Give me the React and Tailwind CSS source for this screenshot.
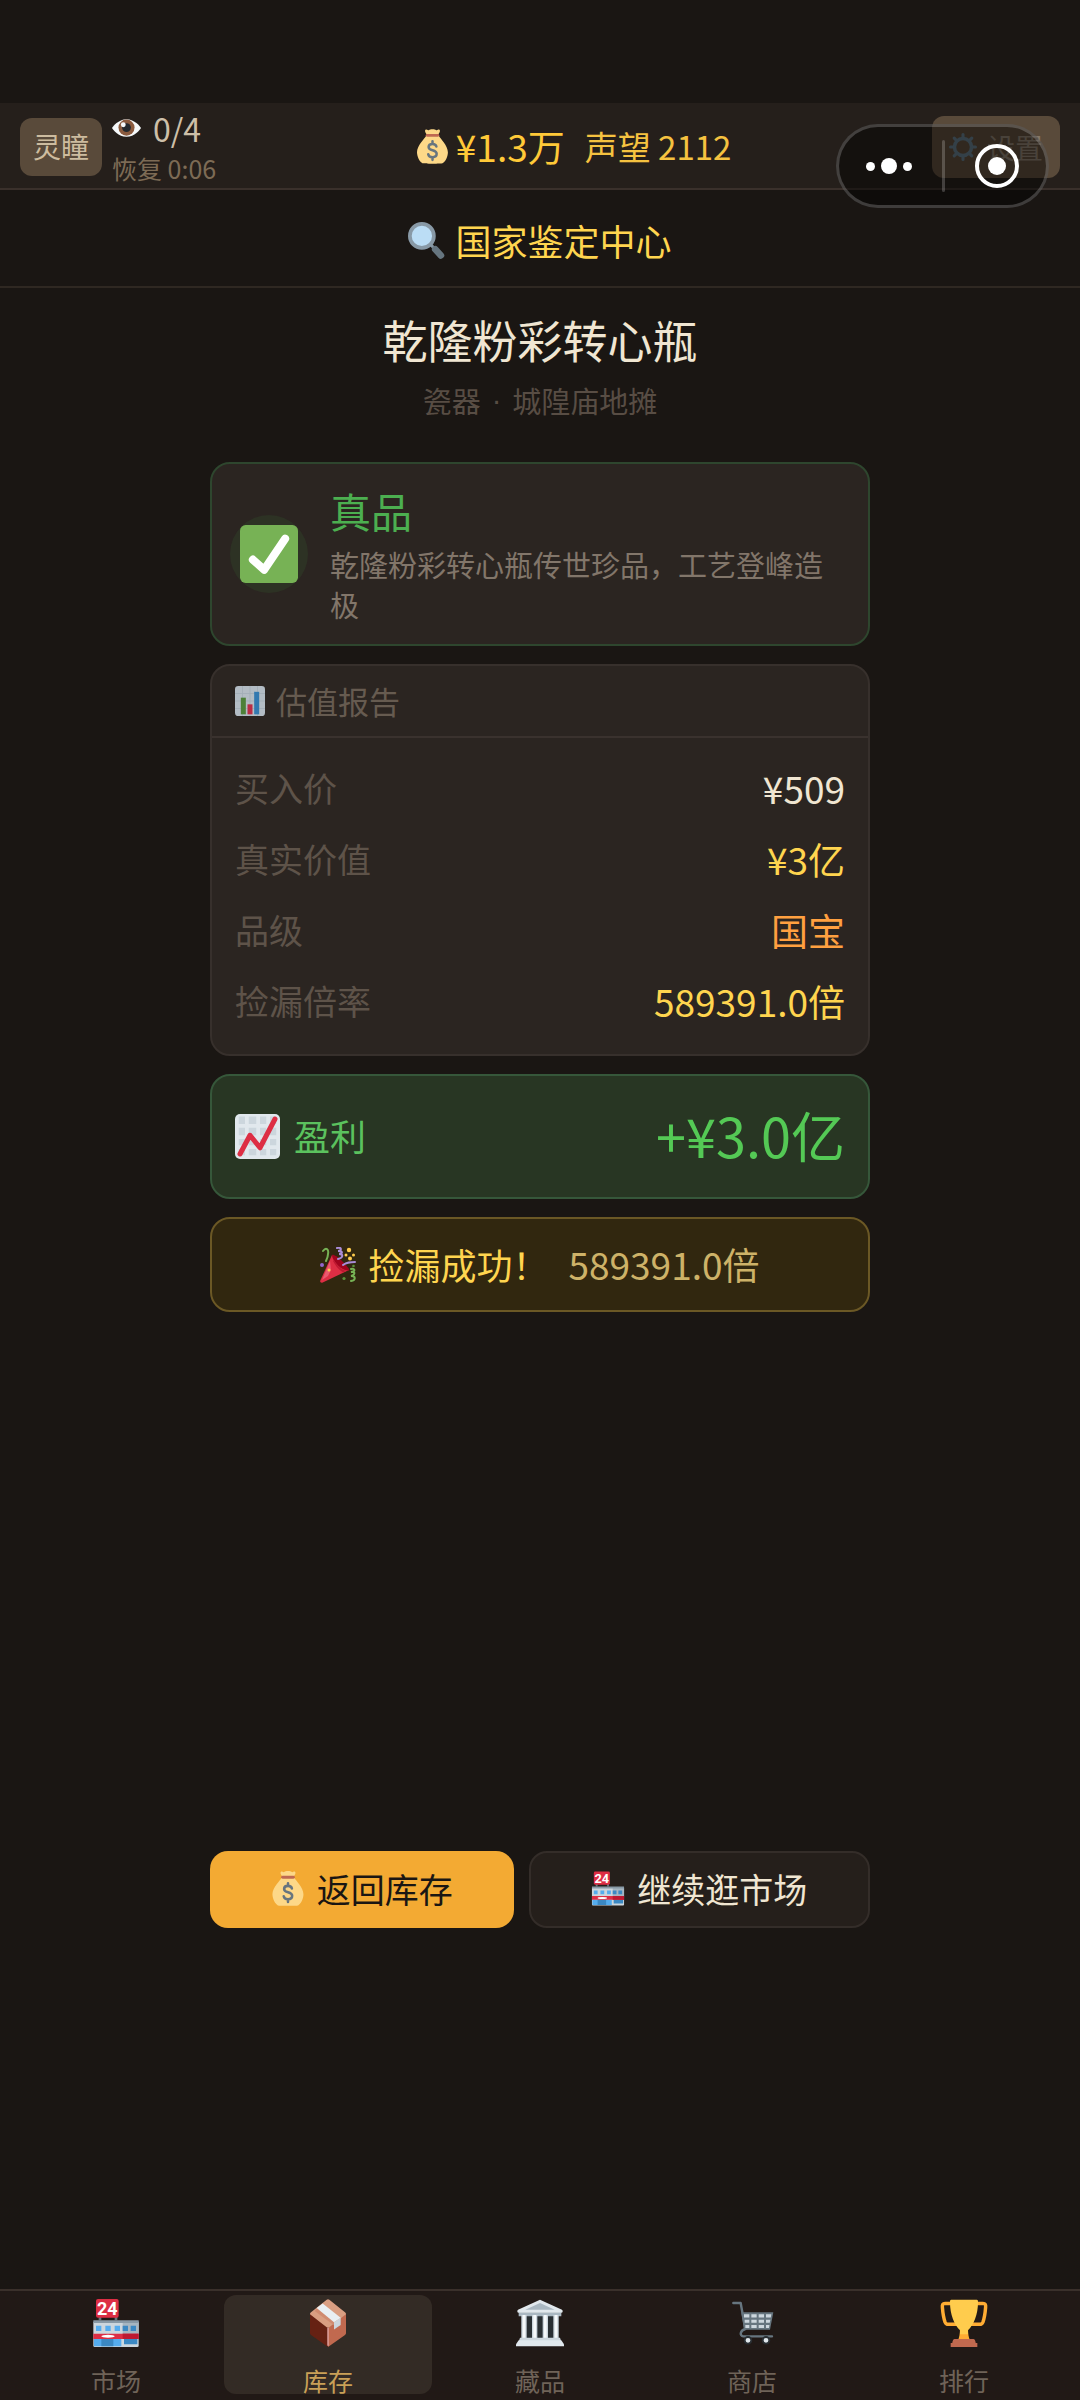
import React from 'react';

const EyeIcon = ({ className }) => (
    <svg viewBox="0 0 36 24" className={className} aria-hidden="true">
        <path fill="#f5f8fa" d="M18 1C8 1 1 10 0 12c1 2 8 11 18 11s17-9 18-11C35 10 28 1 18 1z" />
        <circle cx="18" cy="11.500" r="10" fill="#8a5a3e" />
        <circle cx="18" cy="11.500" r="5.500" fill="#24292e" />
        <circle cx="14" cy="8" r="3" fill="#f5f8fa" />
    </svg>
);

const MoneyBagIcon = ({ className }) => (
    <svg viewBox="0 0 32 36" className={className} aria-hidden="true">
        <path fill="#fdd888" d="M31.900 24c0 1-.5 8.500-5.500 11.400-1 .6-19.800.6-20.800 0C.6 32.500 0 25 0 24c0-7 8-14 9.500-17h13C24 10 31.900 17 31.900 24z" />
        <path fill="#fdd888" d="M22 5.500c1.500-2 2.300-4 1.200-4.800-1.200-.7-2 .8-3.200.4-1.400-.6-1.900-1-4-1-2 0-2.600.4-4 1C10.800 1.500 10 0 8.800.7 7.700 1.500 8.500 3.500 10 5.500z" />
        <rect x="9" y="5" width="14" height="3" rx="1.500" fill="#bf6952" />
        <path fill="none" stroke="#67757f" strokeWidth="2.600" strokeLinecap="round" d="M20 18c-.4-2-2-2.700-4-2.700-2.400 0-4 1.200-4 3.200 0 4.500 8.300 2.300 8.300 7 0 2.200-1.800 3.500-4.300 3.500-2.300 0-4-1-4.400-3M16 12.500v2.500M16 29.200v2.600" />
    </svg>
);

const MagnifierIcon = ({ className }) => (
    <svg viewBox="0 0 36 36" className={className} aria-hidden="true">
        <path stroke="#8899a6" strokeWidth="3" d="M21 21l5 5" />
        <path stroke="#66757f" strokeWidth="6.500" strokeLinecap="round" d="M26.500 26.500l5.500 6" />
        <circle cx="13.500" cy="13.500" r="11.700" fill="#bbddf5" stroke="#8899a6" strokeWidth="3.600" />
    </svg>
);

const CheckIcon = ({ className }) => (
    <svg viewBox="0 0 36 36" className={className} aria-hidden="true">
        <rect width="36" height="36" rx="3.500" fill="#77b255" />
        <path fill="none" stroke="#fff" strokeWidth="5" strokeLinecap="round" strokeLinejoin="round" d="M8 21.500l7 6.300L28 8.500" />
    </svg>
);

const BarsIcon = ({ className }) => (
    <svg viewBox="0 0 36 36" className={className} aria-hidden="true">
        <rect width="36" height="36" rx="4" fill="#b3bcc4" />
        <path stroke="#a2adb7" strokeWidth="1" d="M0 9h36M0 18h36M0 27h36M9 0v36M18 0v36M27 0v36" />
        <path fill="#4d8038" d="M7 14h6v20H7z" />
        <path fill="#bb2c45" d="M15 22h6v12h-6z" />
        <path fill="#3379b0" d="M23 7h6v27h-6z" />
    </svg>
);

const ChartUpIcon = ({ className }) => (
    <svg viewBox="0 0 36 36" className={className} aria-hidden="true">
        <rect width="36" height="36" rx="4" fill="#e1e8ed" />
        <path fill="#ccd6dd" d="M3 2h5v6H3zM11 2h6v6h-6zM20 2h5v6h-5zM28 2h5v6h-5zM3 11h5v6H3zM11 11h6v6h-6zM20 11h5v6h-5zM28 11h5v6h-5zM3 20h5v5H3zM11 20h6v5h-6zM20 20h5v5h-5zM28 20h5v5h-5zM3 28h5v5H3zM11 28h6v5h-6zM20 28h5v5h-5zM28 28h5v5h-5z" />
        <path fill="none" stroke="#dd2e44" strokeWidth="4" strokeLinecap="round" strokeLinejoin="round" d="M4 32l8-15 8 10L32 4" />
    </svg>
);

const PopperIcon = ({ className }) => (
    <svg viewBox="0 0 36 36" className={className} aria-hidden="true">
        <path fill="#dd2e44" d="M12 8L.3 33.500C-.2 35 .7 36 2.200 35.700L29 23z" />
        <path fill="#ea596e" d="M10 14L2 33l6-4 3-6z" />
        <path fill="#a0041e" d="M12 8c1-1 5 1 10 6s8 8.500 7 9.500c-3 .5-7-1-11-5s-6-8-6-10.500z" />
        <path fill="#be1931" d="M14 13c2 4 6 9 12 11l-3 1.500C18 22 15 18 13 14z" />
        <path fill="none" stroke="#77b255" strokeWidth="2" strokeLinecap="round" d="M3 4c3-4 6-2 5 3 0 3-1 5-2 7M31 22c5-1 4 3 0 3 5-1 4 3 0 4 5 0 5 4 0 5" />
        <path fill="none" stroke="#aa8dd8" strokeWidth="2" strokeLinecap="round" d="M17 1c6-1 4 3 1 3 6 0 4 3 1 3 5 0 4 4-1 5M23 18c4-3 7-3 12-3" />
        <g fill="#ffcc4d">
            <circle cx="29" cy="3" r="2.200" />
            <circle cx="26" cy="8" r="1.500" />
            <circle cx="33.500" cy="8" r="1.500" />
            <circle cx="30" cy="11.500" r="2" />
            <circle cx="9" cy="23" r="1.500" />
        </g>
        <circle cx="2" cy="18" r="2" fill="#9266cc" />
        <circle cx="24" cy="31.500" r="1.600" fill="#5c913b" />
        <circle cx="33.500" cy="19" r="1.300" fill="#5c913b" />
    </svg>
);

const StoreIcon = ({ className }) => (
    <svg viewBox="0 0 36 36" className={className} aria-hidden="true">
        <path fill="#66757f" d="M5 12h2v4H5zM17 12h2v4h-2z" />
        <rect x="3" y="0" width="17" height="14" rx="1.500" fill="#dd2e44" />
        <text x="11.500" y="12" textAnchor="middle" fontSize="13.500" fontWeight="700" fill="#fff" fontFamily="Roboto, sans-serif">24</text>
        <path fill="#ccd6dd" d="M1 17h34v18a1 1 0 0 1-1 1H2a1 1 0 0 1-1-1z" />
        <path fill="#a7b6c1" d="M23 17h12v10H23z" />
        <path fill="#8899a6" d="M1 16h34v2H1z" />
        <path fill="#55acee" d="M3 20h4v4H3zM10 20h4v4h-4zM17 20h4v4h-4zM1.500 30H22v5.500H1.500z" />
        <path fill="#3b88c3" d="M23 20h4v4h-4zM29 20h4v4h-4zM7 30h9v5.500H7zM24 30h10v4H24z" />
        <path fill="#dd2e44" d="M1 26h34v4H1z" />
        <path fill="#be1931" d="M23 26h12v4H23z" />
        <ellipse cx="12" cy="28" rx="5" ry="1.100" fill="#fff" />
    </svg>
);

const BoxIcon = ({ className }) => (
    <svg viewBox="0 0 36 36" className={className} aria-hidden="true">
        <path fill="#662113" d="M4.500 11v14.500c0 .8.4 1.300 1 1.700L18 36V21.500z" />
        <path fill="#c1694f" d="M31.500 11v14.500c0 .8-.4 1.300-1 1.700L18 36V21.500z" />
        <path fill="#d99e82" d="M4.500 11.500c0-.8.3-1.200 1-1.700L17 .6c.7-.5 1.300-.5 2 0l11.500 9.200c.7.500 1 .9 1 1.700L19 21.200c-.7.5-1.300.5-2 0z" />
        <path fill="#d08b70" d="M8 9l15 11 4-3L12 5z" />
        <path fill="#ccd6dd" d="M22.500 17.500v5.300l5-3.300v-5.400z" />
        <path fill="#e9eff3" d="M9.500 6.700L22.500 17.500l5-3.400L14 3.300z" />
        <path stroke="#e6aaaa" strokeWidth="1" d="M18 21.500V35" />
    </svg>
);

const MuseumIcon = ({ className }) => (
    <svg viewBox="0 0 36 36" className={className} aria-hidden="true">
        <path fill="#292f33" d="M4 12h28v19H4z" />
        <path fill="#aab8c2" d="M2 10h32v3H2z" />
        <path fill="#e1e8ed" d="M18 .5L34.500 8c.8.500.7 2.300-.5 2.300H2C.8 10.300.7 8.500 1.500 8z" />
        <path fill="#aab8c2" d="M18 3l11 5H7z" />
        <path fill="#ccd6dd" d="M4 12h4v19H4zM12 12h4v19h-4zM20 12h4v19h-4zM28 12h4v19h-4z" />
        <path fill="#f5f8fa" d="M5 12h2v19H5zM13 12h2v19h-2zM21 12h2v19h-2zM29 12h2v19h-2z" />
        <path fill="#ccd6dd" d="M3 29h30l1 3H2z" />
        <path fill="#e1e8ed" d="M2 31h32l2 3v1.500H0V34z" />
    </svg>
);

const CartIcon = ({ className }) => (
    <svg viewBox="0 0 36 36" className={className} aria-hidden="true">
        <path fill="#66757f" d="M10 10h24l-2.500 13H12z" />
        <path fill="none" stroke="#66757f" strokeWidth="1.800" strokeLinecap="round" strokeLinejoin="round" d="M4 3h5.500l3.500 19.500c-4 1-4.500 5-1.500 5.500H33" />
        <path fill="#ccd6dd" d="M12 11.500h4v2.300h-4zM17.500 11.500h4v2.300h-4zM23 11.500h4v2.300h-4zM28.500 11.500h4l-.4 2.300h-3.600zM12.500 15.500H16v2.300h-3.500zM17.500 15.500h4v2.300h-4zM23 15.500h4v2.300h-4zM28.500 15.500h3.300l-.5 2.300h-2.800zM13 19.500h3v2.300h-3zM17.500 19.500h4v2.300h-4zM23 19.500h4v2.300h-4zM28.500 19.500h2.600l-.4 2.300h-2.200z" />
        <circle cx="15" cy="31" r="2.500" fill="#e1e8ed" stroke="#292f33" strokeWidth="1.400" />
        <circle cx="28.500" cy="31" r="2.500" fill="#e1e8ed" stroke="#292f33" strokeWidth="1.400" />
    </svg>
);

const TrophyIcon = ({ className }) => (
    <svg viewBox="0 0 36 36" className={className} aria-hidden="true">
        <path fill="none" stroke="#ffac33" strokeWidth="2.600" d="M9 3.300H3.800c-1.800 0-2.200 1-2 3 .3 4 .9 8 2 11 .5 1.200 1.300 1.700 2.500 1.700H13M27 3.300h5.200c1.800 0 2.200 1 2 3-.3 4-.9 8-2 11-.5 1.200-1.300 1.700-2.500 1.700H23" />
        <path fill="#ffac33" d="M15 22h6c0 4 .5 7 1.500 9h-9c1-2 1.500-5 1.500-9z" />
        <path fill="#ffcc4d" d="M8.500.5h19c1 0 1 .8 1 2 0 9-3.200 17-7.500 21v3h-6v-3C10.700 19.500 7.500 11.500 7.500 2.500c0-1.200 0-2 1-2z" />
        <path fill="#c1694f" d="M11 30h14c1 0 1.500 1 1.800 3H28V36H8v-3h1.200c.3-2 .8-3 1.800-3z" />
    </svg>
);

const GearIcon = ({ className }) => (
    <svg viewBox="0 0 36 36" className={className} aria-hidden="true">
        <circle cx="18" cy="18" r="11" fill="none" stroke="#5f7683" strokeWidth="4.500" />
        <path fill="none" stroke="#5f7683" strokeWidth="4" strokeLinecap="round" d="M18 2v4M18 30v4M2 18h4M30 18h4M6.700 6.700l2.800 2.800M26.500 26.500l2.800 2.800M6.700 29.300l2.800-2.800M26.500 9.500l2.800-2.800" />
    </svg>
);

const rows = [
    { label: '买入价', value: '¥509', color: 'text-[#f0e6d2]' },
    { label: '真实价值', value: '¥3亿', color: 'text-[#ffd54f]' },
    { label: '品级', value: '国宝', color: 'text-[#ffa040]' },
    { label: '捡漏倍率', value: '589391.0倍', color: 'text-[#ffd54f]' },
];

const tabs = [
    { label: '市场', Icon: StoreIcon },
    { label: '库存', Icon: BoxIcon, active: true },
    { label: '藏品', Icon: MuseumIcon },
    { label: '商店', Icon: CartIcon },
    { label: '排行', Icon: TrophyIcon },
];

const StatusHeader = () => (
    <header className="flex h-[87px] items-center justify-between border-b-2 border-[#3a302b] bg-[#251f1b] px-5 pt-0.5">
        <div className="flex items-center gap-2.5">
            <button type="button" className="h-[58px] rounded-xl bg-[#594a3a] px-[13px] pb-0.5 text-[28px] leading-10 text-[#cdbc9f]">
                灵瞳
            </button>
            <div className="pt-0.5">
                <div className="flex items-center gap-3 text-[32px] leading-10 text-[#cdbfa8]">
                    <EyeIcon className="h-5 w-[29px]" />
                    0/4
                </div>
                <div className="text-[25px] leading-10 text-[#7d6b55]">恢复 0:06</div>
            </div>
        </div>
        <div className="flex items-center">
            <MoneyBagIcon className="mr-2 h-[35px] w-[31px]" />
            <span className="pb-0.5 text-[37px] leading-10 text-[#ffc938]">¥1.3万</span>
            <span className="ml-5 pb-0.5 text-[33px] leading-10 text-[#f5c240]">声望 2112</span>
        </div>
        <button type="button" className="flex h-[62px] items-center gap-2.5 rounded-xl bg-[#594a3a] px-[17px] text-[28px] leading-10 text-[#85786a]">
            <GearIcon className="h-7 w-7" />
            设置
        </button>
    </header>
);

// Host mini-program controls, floating over the page header
const Capsule = () => (
    <div className="absolute top-[124px] right-[31px] flex h-[84px] w-[213px] items-center rounded-full border-3 border-white/20 bg-black/45">
        <button type="button" aria-label="更多" className="flex h-full flex-1 items-center justify-center gap-1.5 pr-1">
            <span className="h-[9px] w-[9px] rounded-full bg-white" />
            <span className="h-4 w-4 rounded-full bg-white" />
            <span className="h-[9px] w-[9px] rounded-full bg-white" />
        </button>
        <span className="h-[52px] w-[3px] rounded-full bg-white/20" />
        <button type="button" aria-label="关闭" className="flex h-full flex-1 items-center justify-center pl-0.5">
            <span className="flex h-11 w-11 items-center justify-center rounded-full border-4 border-white">
                <span className="h-[18px] w-[18px] rounded-full bg-white" />
            </span>
        </button>
    </div>
);

const ResultCard = () => (
    <section className="flex items-center gap-[22px] rounded-[20px] border-2 border-[#2e462e] bg-[#2b2521] px-[18px] py-5">
        <div className="flex h-[78px] w-[78px] shrink-0 items-center justify-center rounded-full bg-[#2d3224]">
            <CheckIcon className="h-[58px] w-[58px]" />
        </div>
        <div>
            <h2 className="mb-2 text-[41px] leading-[52px] text-[#4caf50]">真品</h2>
            <p className="text-[29px] leading-10 text-[#82766a]">乾隆粉彩转心瓶传世珍品，工艺登峰造极</p>
        </div>
    </section>
);

const ReportCard = () => (
    <section className="rounded-[20px] border-2 border-[#37302c] bg-[#2b2521]">
        <h2 className="flex items-center gap-[11px] border-b-2 border-[#3a322e] px-[23px] py-[15px] text-[31px] leading-10 text-[#665b50]">
            <BarsIcon className="h-[30px] w-[30px]" />
            估值报告
        </h2>
        <dl className="px-[23px] pt-3.5 pb-[18px]">
            {rows.map((row) => (
                <div key={row.label} className="flex h-[71px] items-center justify-between">
                    <dt className="text-[34px] leading-10 text-[#5e5349]">{row.label}</dt>
                    <dd className={`text-[37px] leading-10 ${row.color}`}>{row.value}</dd>
                </div>
            ))}
        </dl>
    </section>
);

const App = () => {
    return (
        <div lang="zh-CN" className="relative flex min-h-screen flex-col bg-[#1a1613] pt-[103px] font-['Noto_Sans_CJK_SC',sans-serif]">
            <StatusHeader />
            <Capsule />

            <div className="flex h-[98px] items-center justify-center gap-2.5 border-b-2 border-[#2f2822] pt-1 text-[36px] leading-10 text-[#ffd54f]">
                <MagnifierIcon className="h-[37px] w-[37px]" />
                国家鉴定中心
            </div>

            <main className="mx-auto flex w-[61%] min-w-[660px] flex-1 flex-col">
                <div className="pt-[22px] pb-[42px] text-center">
                    <h1 className="text-[45px] leading-[60px] text-[#f0e6d2]">乾隆粉彩转心瓶</h1>
                    <p className="mt-2.5 flex justify-center gap-[11px] text-[29px] leading-10 text-[#584d44]">
                        <span>瓷器</span>
                        <span className="font-['Liberation_Sans',sans-serif]">·</span>
                        <span>城隍庙地摊</span>
                    </p>
                </div>

                <div className="flex flex-col gap-[18px]">
                    <ResultCard />
                    <ReportCard />

                    <section className="flex h-[125px] items-center justify-between rounded-[20px] border-2 border-[#36573a] bg-[#283623] px-[23px]">
                        <div className="flex items-center gap-3.5 text-[36px] leading-10 text-[#5bc25e]">
                            <ChartUpIcon className="h-[45px] w-[45px]" />
                            <span className="pb-1">盈利</span>
                        </div>
                        <strong className="pb-1 text-[54px] leading-[60px] font-normal text-[#54c955]">+¥3.0亿</strong>
                    </section>

                    <section className="flex h-[95px] items-center justify-center rounded-[20px] border-2 border-[#6b5825] bg-[#31270f] leading-10">
                        <PopperIcon className="mr-3 h-9 w-9" />
                        <span className="pb-0.5 text-[36px] text-[#ffd54f]">捡漏成功！</span>
                        <span className="ml-5 pb-0.5 text-[37px] text-[#cdb268]">589391.0倍</span>
                    </section>
                </div>

                <div className="mt-auto mb-[361px] flex gap-[15px] text-[34px] leading-10">
                    <button type="button" className="flex h-[77px] flex-auto items-center justify-center gap-3 rounded-[18px] bg-[#f3aa33] pb-0.5 text-[#1a1613]">
                        <MoneyBagIcon className="h-[35px] w-[34px]" />
                        返回库存
                    </button>
                    <button type="button" className="flex h-[77px] flex-auto items-center justify-center gap-3 rounded-[18px] border-2 border-[#342d29] bg-[#251f1b] pb-0.5 text-[#f0e6d2]">
                        <StoreIcon className="h-[35px] w-[34px]" />
                        继续逛市场
                    </button>
                </div>
            </main>

            <nav className="flex gap-1 border-t-2 border-[#3a302b] bg-[#211916] px-3 pt-1 pb-1.5">
                {tabs.map(({ label, Icon, active }) => (
                    <a
                        key={label}
                        href="#"
                        className={`flex h-[99px] flex-1 flex-col items-center gap-5 rounded-xl pt-1 text-[25px] leading-[26px] ${active ? 'bg-[#332b25] text-[#c9a057]' : 'text-[#6f6358]'}`}
                    >
                        <Icon className="h-12 w-12 shrink-0" />
                        {label}
                    </a>
                ))}
            </nav>
        </div>
    );
};

export default App;
